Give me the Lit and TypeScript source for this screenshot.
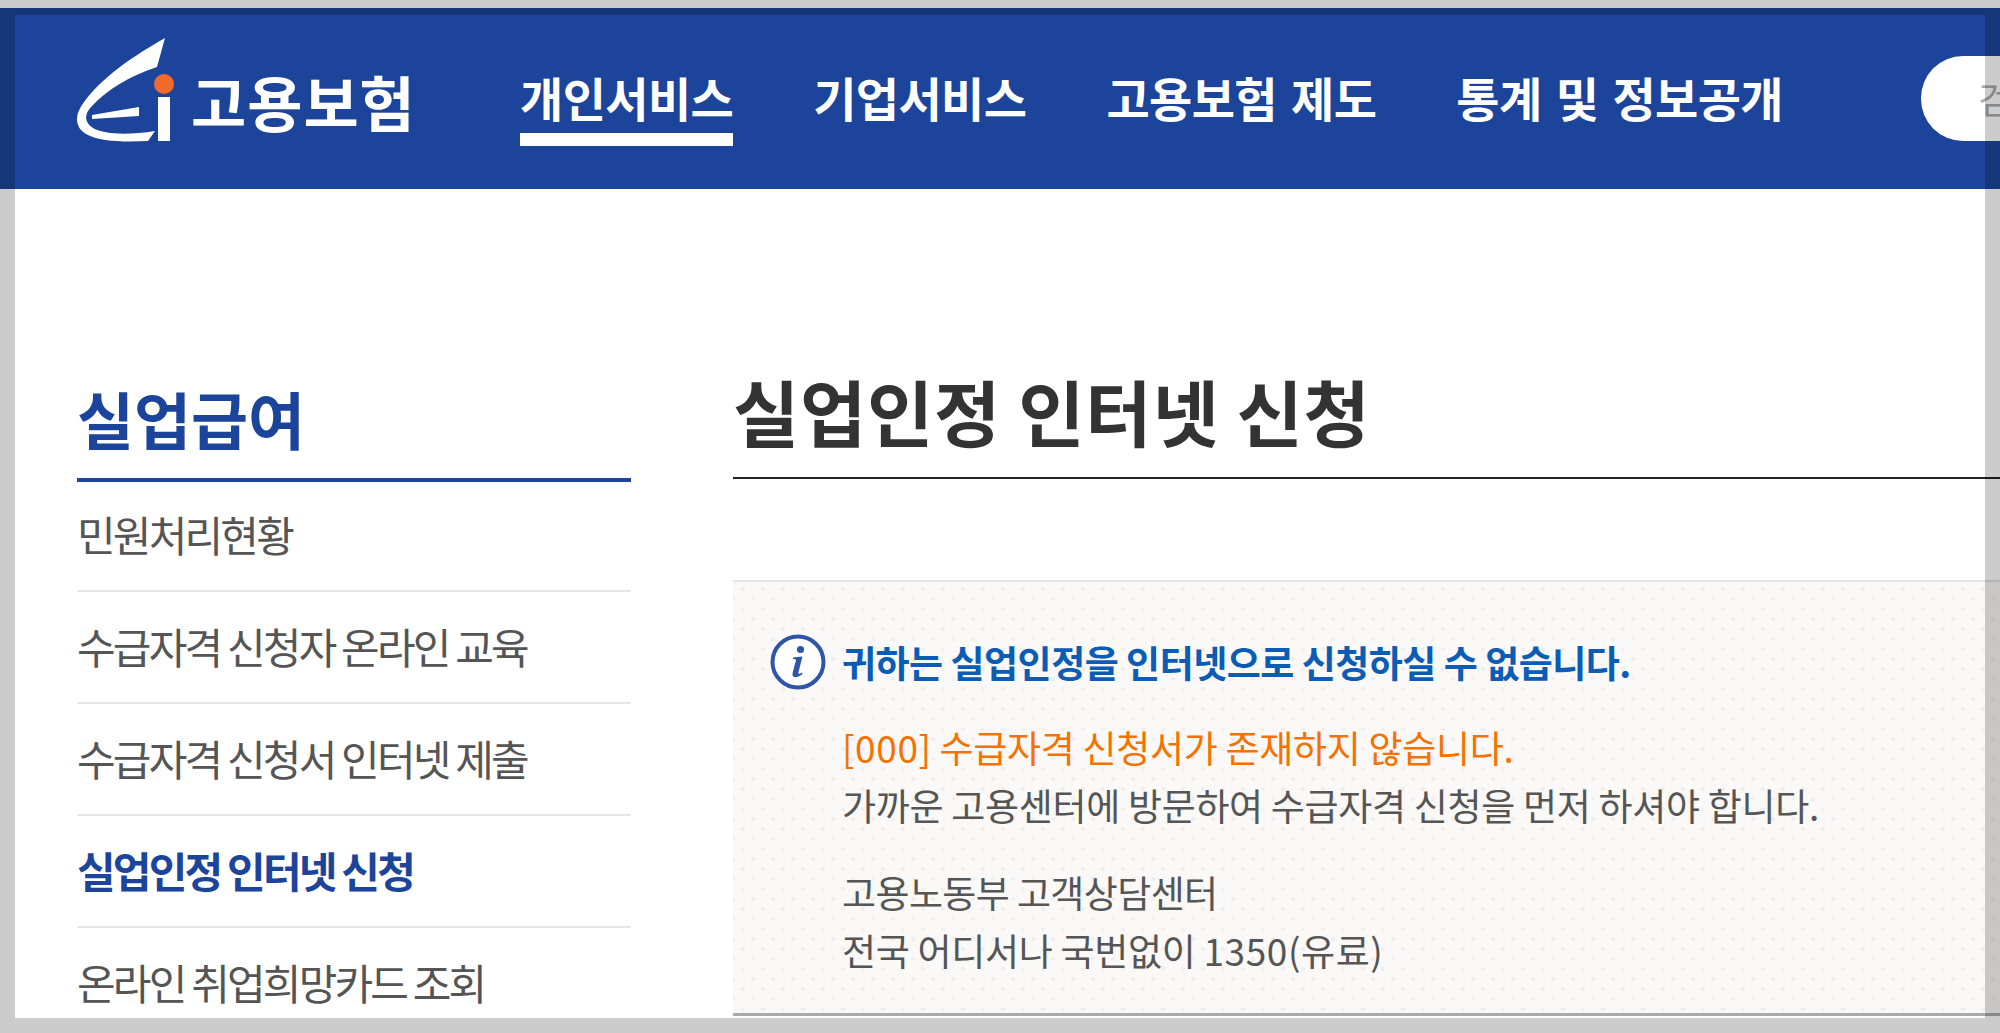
import { css, html, LitElement } from "lit";
import { customElement } from "lit/decorators.js";

const NAV = ["개인서비스", "기업서비스", "고용보험 제도", "통계 및 정보공개"];
const SIDE = [
  "민원처리현황",
  "수급자격 신청자 온라인 교육",
  "수급자격 신청서 인터넷 제출",
  "실업인정 인터넷 신청",
  "온라인 취업희망카드 조회",
];

@customElement("app-root")
class AppRoot extends LitElement {
  protected render() {
    return html`
      <div class="page">
        <header class="top">
          <div class="logo">
            <svg width="105" height="115" viewBox="70 30 105 115">
              <path
                fill="#fff"
                d="M165 38 C135 55 100 78 82 105 C74 117 76 128 86 134 C100 142 125 142 148 141 L155 131 C130 135 105 135 93 128 C84 122 84 114 92 106 C108 89 130 76 157 67 Z"
              />
              <path fill="#fff" d="M92 115 L139 107 L139 116 L92 119 Z" />
              <rect x="158" y="97" width="12" height="44" fill="#fff" />
              <circle cx="164" cy="84" r="10" fill="#f26a2a" />
            </svg>
            <span class="logo-text">고용보험</span>
          </div>
          <nav class="nav">
            ${NAV.map(
              (item, i) =>
                html`<a class=${i === 0 ? "nav-item active" : "nav-item"}>${item}</a>`
            )}
          </nav>
          <div class="search"><span>검색</span></div>
        </header>
        <div class="body">
          <aside class="side">
            <h2 class="side-title">실업급여</h2>
            ${SIDE.map(
              (item, i) =>
                html`<div class=${i === 3 ? "side-row current" : "side-row"}>${item}</div>`
            )}
          </aside>
          <main class="main">
            <h1 class="title">실업인정 인터넷 신청</h1>
            <section class="notice">
              <div class="notice-head">
                <svg class="info" width="56" height="56" viewBox="0 0 56 56">
                  <circle cx="28" cy="28" r="25.5" fill="#fff" stroke="#2f55a8" stroke-width="4" />
                  <circle cx="30.5" cy="15.5" r="3.6" fill="#2f55a8" />
                  <path
                    fill="#2f55a8"
                    d="M23 23.5 L32.5 22.5 L28.5 38 C28 40 29 40.5 32 38.5 L32.5 40 C29 43 22.5 45 22.5 40.5 C22.5 38 25 30 26 26.5 C26 25 25 25 23 25 Z"
                  />
                </svg>
                <strong>귀하는 실업인정을 인터넷으로 신청하실 수 없습니다.</strong>
              </div>
              <p class="msg"><span class="err"><span class="num">[000]</span> 수급자격 신청서가 존재하지 않습니다.</span><br />가까운 고용센터에 방문하여 수급자격 신청을 먼저 하셔야 합니다.</p>
              <p class="msg"><span class="tight">고용노동부 고객상담센터</span><br />전국 어디서나 국번없이 <span class="num">1350(유료)</span></p>
            </section>
          </main>
        </div>
        <div class="frame"></div>
      </div>
    `;
  }

  static styles = css`
    :host {
      display: block;
      font-family: "Noto Sans CJK KR", "Noto Sans", sans-serif;
    }

    .page {
      position: relative;
      width: 2000px;
      height: 1033px;
      overflow: hidden;
      background: #fff;
      padding-top: 8px;
      box-sizing: border-box;
    }

    .frame {
      position: absolute;
      inset: 0;
      border: 15px solid rgba(0, 0, 0, 0.2);
      pointer-events: none;
    }

    .top {
      position: relative;
      display: flex;
      align-items: center;
      height: 181px;
      padding-left: 77px;
      background: #1c449b;
      box-sizing: border-box;
    }

    .logo {
      display: flex;
      align-items: flex-end;
      align-self: flex-start;
      width: 450px;
      flex: none;
      color: #fff;
      margin-left: -7px;
      padding-top: 22px;
      box-sizing: border-box;
    }

    .logo svg {
      display: block;
      flex: none;
    }

    .logo-text {
      font-size: 60px;
      line-height: 70px;
      font-weight: 700;
      letter-spacing: 1px;
      margin: 0 0 9px 16px;
      filter: blur(0.6px);
    }

    .nav {
      display: flex;
      gap: 80px;
      flex: none;
    }

    .nav-item {
      color: #fff;
      font-size: 47px;
      font-weight: 700;
      line-height: 64px;
      letter-spacing: -0.6px;
      word-spacing: 4px;
      white-space: nowrap;
      padding-bottom: 4px;
      border-bottom: 13px solid transparent;
      margin-top: 14px;
    }

    .nav-item.active {
      border-bottom-color: #fff;
    }

    .search {
      position: absolute;
      left: 1921px;
      top: 48px;
      width: 200px;
      height: 85px;
      box-sizing: border-box;
      border-radius: 42px;
      background: #fff;
      padding-left: 57px;
      color: #aaa;
      font-size: 36px;
      line-height: 85px;
      white-space: nowrap;
    }

    .body {
      display: flex;
      padding-left: 77px;
    }

    .side {
      width: 554px;
      flex: none;
      padding-top: 179px;
    }

    .side-title {
      margin: 0 0 -2px;
      font-size: 62px;
      line-height: 100px;
      font-weight: 700;
      letter-spacing: 0;
      color: #1c449b;
      padding-bottom: 10px;
      border-bottom: 4px solid #1c449b;
    }

    .side-row {
      height: 112px;
      box-sizing: border-box;
      border-bottom: 2px solid #e6e6ea;
      font-size: 42px;
      font-weight: 400;
      line-height: 108px;
      letter-spacing: -2.8px;
      color: #555;
      white-space: nowrap;
    }

    .side-row.current {
      color: #1c449b;
      font-weight: 700;
    }

    .main {
      flex: none;
      width: 1400px;
      margin-left: 102px;
      padding-top: 165px;
    }

    .title {
      margin: 0;
      font-size: 72px;
      line-height: 112px;
      font-weight: 700;
      letter-spacing: 0.8px;
      color: #333;
      height: 123px;
      border-bottom: 2px solid #222;
    }

    .notice {
      margin-top: 101px;
      height: 436px;
      box-sizing: border-box;
      padding: 52px 0 0 37px;
      border-top: 2px solid #e5e3e0;
      border-bottom: 3px solid #aaa;
      background-color: #faf9f7;
      background-image:
        radial-gradient(circle, #f0efed 2px, transparent 2.5px),
        radial-gradient(circle, #f0efed 2px, transparent 2.5px);
      background-size: 20px 20px;
      background-position: 0 -3px, -10px 7px;
    }

    .notice-head {
      display: flex;
      align-items: center;
      gap: 16px;
      color: #0b5cb5;
      font-size: 37px;
      line-height: 56px;
      letter-spacing: -0.5px;
    }

    .info {
      flex: none;
    }

    .msg {
      margin: 0 0 29px 72px;
      font-size: 37px;
      line-height: 58px;
      font-weight: 400;
      color: #555;
      letter-spacing: -0.3px;
    }

    .notice-head + .msg {
      margin-top: 28px;
    }

    .err {
      color: #f57200;
    }

    .num {
      letter-spacing: 0.6px;
    }

    .tight {
      letter-spacing: -0.6px;
    }
  `;
}
